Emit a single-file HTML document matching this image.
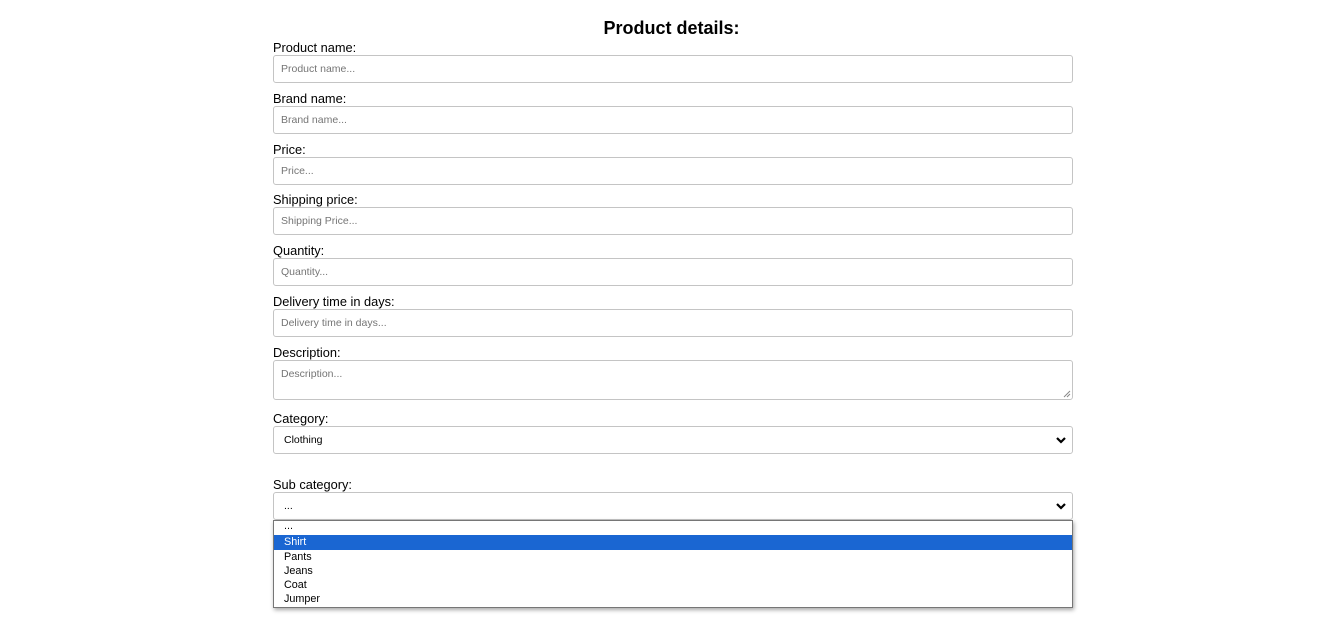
<!DOCTYPE html>
<html><head><style>
body{margin:0;background:#fff;font-family:"Liberation Sans",Arial,sans-serif;color:#000;width:1343px;height:632px;overflow:hidden;position:relative}
h1{position:absolute;left:0;width:1343px;top:17px;margin:0;text-align:center;font-size:18px;font-weight:bold;line-height:22px}
.l{position:absolute;left:273px;font-size:12.8px;line-height:15px}
.f{position:absolute;left:273px;width:798px;height:26px;border:1px solid #c4c4c4;border-radius:3px;font-size:10.5px;color:#757575;line-height:26px;box-sizing:content-box}
.f span{padding-left:7px}
.s{color:#000;}
.s span{padding-left:10px}
.chev{position:absolute;right:5px;top:9px}
.dd{position:absolute;left:273px;top:520px;width:798px;height:86px;border:1px solid #767676;box-shadow:1px 2px 4px rgba(0,0,0,.35);background:#fff;font-size:10.8px}
.dd div{height:14.3px;line-height:14px;padding-left:10px}
.dd .sel{background:#1a66d2;color:#fff}
</style></head><body>
<h1>Product details:</h1>
<div class="l" style="top:40px">Product name:</div><div class="f" style="top:55px"><span>Product name...</span></div>
<div class="l" style="top:91px">Brand name:</div><div class="f" style="top:106px"><span>Brand name...</span></div>
<div class="l" style="top:142px">Price:</div><div class="f" style="top:157px"><span>Price...</span></div>
<div class="l" style="top:192px">Shipping price:</div><div class="f" style="top:207px"><span>Shipping Price...</span></div>
<div class="l" style="top:243px">Quantity:</div><div class="f" style="top:258px"><span>Quantity...</span></div>
<div class="l" style="top:294px">Delivery time in days:</div><div class="f" style="top:309px"><span>Delivery time in days...</span></div>
<div class="l" style="top:345px">Description:</div><div class="f" style="top:360px;height:38px;line-height:26px"><span>Description...</span>
<svg style="position:absolute;right:1px;bottom:1px" width="8" height="8"><path d="M1 7L7 1M4 7L7 4" stroke="#888" stroke-width="1"/></svg></div>
<div class="l" style="top:411px">Category:</div><div class="f s" style="top:426px"><span>Clothing</span><svg class="chev" width="12" height="9"><path d="M2 2L6 6L10 2" stroke="#000" stroke-width="2.2" fill="none"/></svg></div>
<div class="l" style="top:477px">Sub category:</div><div class="f s" style="top:492px"><span>...</span><svg class="chev" width="12" height="9"><path d="M2 2L6 6L10 2" stroke="#000" stroke-width="2.2" fill="none"/></svg></div>
<div class="dd"><div style="line-height:10px">...</div><div class="sel">Shirt</div><div>Pants</div><div>Jeans</div><div>Coat</div><div>Jumper</div></div>
</body></html>
